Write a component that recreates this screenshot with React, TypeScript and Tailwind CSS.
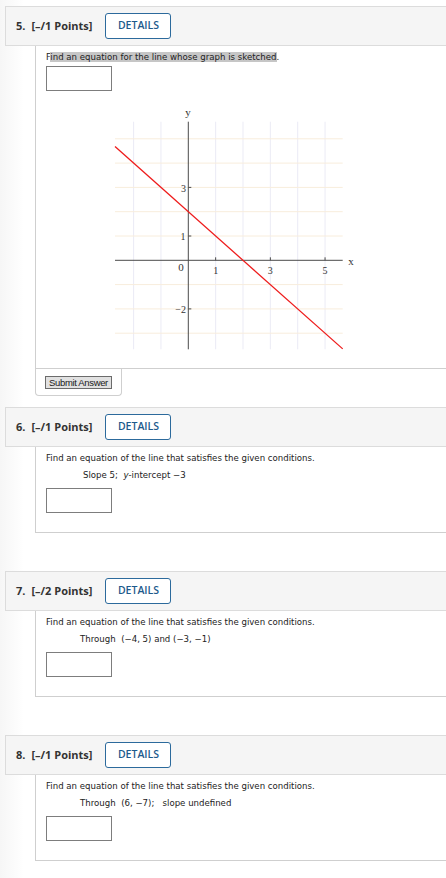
import React from "react";

function Header({ n, pts }: { n: string; pts: string }) {
  return (
    <div className="ml-[5px] h-[40px] border-y border-l border-[#dcdcdc] bg-[#f5f5f5] flex items-center pl-[10px]">
      <span className="font-['Open_Sans'] font-bold text-[11px] text-[#333]">{n}</span>
      <span className="ml-[6px] font-['Open_Sans'] font-bold text-[11px] text-[#333]">{pts}</span>
      <button className="ml-[13px] w-[66px] h-[26px] rounded-[3px] border-[1.5px] border-[#2c6a9c] bg-white font-['Open_Sans'] font-semibold text-[10.5px] text-[#1d5a8c] flex items-center justify-center">
        DETAILS
      </button>
    </div>
  );
}

function AnswerBox() {
  return <div className="mt-[7px] w-[66px] h-[25px] border border-[#7d7d7d] bg-white" />;
}

function Graph() {
  const ox = 83.3;
  const oy = 156.3;
  const ux = 27.35;
  const uy = 24.3;
  const xl = 10;
  const xr = 237.7;
  const yt = 17.7;
  const yb = 245.3;
  const vx = [-2, -1, 1, 2, 3, 4, 5];
  const hy = [5, 4, 3, 2, 1, -1, -2, -3];
  const f = (x: number) => -x + 2;
  const x1 = (xl - ox) / ux;
  const x2 = (xr - ox) / ux;
  return (
    <svg width="250" height="250" className="ml-[59px] mt-[13px] block" style={{ fontFamily: "'Liberation Serif', serif" }}>
      {vx.map((k) => (
        <line key={"v" + k} x1={ox + ux * k} x2={ox + ux * k} y1={yt} y2={yb} stroke="#ebebf5" strokeWidth="1" />
      ))}
      {hy.map((k) => (
        <line key={"h" + k} x1={xl} x2={xr} y1={oy - uy * k} y2={oy - uy * k} stroke="#f8eddc" strokeWidth="1" />
      ))}
      <line x1={xl} x2={xr} y1={oy} y2={oy} stroke="#4a4a4a" strokeWidth="1" />
      <line x1={ox} x2={ox} y1={yt} y2={yb} stroke="#4a4a4a" strokeWidth="1" />
      {[1, 3, 5].map((k) => (
        <line key={"tx" + k} x1={ox + ux * k} x2={ox + ux * k} y1={oy - 3} y2={oy} stroke="#4a4a4a" strokeWidth="1" />
      ))}
      {[3, 1, -2].map((k) => (
        <line key={"ty" + k} x1={ox} x2={ox + 3} y1={oy - uy * k} y2={oy - uy * k} stroke="#4a4a4a" strokeWidth="1" />
      ))}
      <line
        x1={xl}
        y1={oy - uy * f(x1)}
        x2={xr}
        y2={oy - uy * f(x2)}
        stroke="#ee1c1c"
        strokeWidth="1.3"
      />
      <text x={83} y={12} fontSize="11" fill="#333" textAnchor="middle">y</text>
      <text x={246} y={161} fontSize="11" fill="#333" textAnchor="middle">x</text>
      <text x={81} y={88} fontSize="10" fill="#333" textAnchor="end">3</text>
      <text x={80.5} y={135.5} fontSize="10" fill="#333" textAnchor="end">1</text>
      <text x={81} y={208.5} fontSize="10" fill="#333" textAnchor="end">−2</text>
      <text x={76} y={166.5} fontSize="11" fill="#333" textAnchor="middle">0</text>
      <text x={ox + ux} y={169.5} fontSize="10" fill="#333" textAnchor="middle">1</text>
      <text x={ox + ux * 3} y={169.5} fontSize="10" fill="#333" textAnchor="middle">3</text>
      <text x={ox + ux * 5} y={169.5} fontSize="10" fill="#333" textAnchor="middle">5</text>
    </svg>
  );
}

const body = "font-['DejaVu_Sans'] text-[8.6px] leading-[12px] text-[#222] whitespace-pre";

export default function App() {
  return (
    <div className="w-[446px] min-h-[878px] overflow-hidden bg-[linear-gradient(to_right,#f6f6f6,#ffffff_24px)] pt-[6px]">
      {/* Question 5 */}
      <Header n="5." pts="[–/1 Points]" />
      <div className="ml-[35px] border-l border-b border-[#cfcfcf] bg-white pl-[10px] pt-[5px] pb-[14px]">
        <p className={body}>
          F<span className="bg-[#c6c6c6]">ind an equation for the line whose graph is sketched</span>.
        </p>
        <div className="mt-[3px] w-[66px] h-[25px] border border-[#7d7d7d] bg-white" />
        <Graph />
      </div>
      <div className="ml-[35px] w-[87px] h-[27px] border-x border-b border-[#cfcfcf] rounded-b-[4px] bg-white pl-[9px] pt-[7px]">
        <button className="w-[67px] h-[13px] border border-[#6b6b6b] bg-[#e1e1e1] font-['Liberation_Sans'] text-[9.5px] leading-[11px] tracking-[-0.35px] text-[#1a1a1a] flex items-center justify-center">
          Submit Answer
        </button>
      </div>

      {/* Question 6 */}
      <div className="mt-[11px]">
        <Header n="6." pts="[–/1 Points]" />
        <div className="ml-[35px] border-l border-b border-[#cfcfcf] bg-white pl-[10px] pt-[5px] pb-[19px]">
          <p className={body}>Find an equation of the line that satisfies the given conditions.</p>
          <p className={body + " mt-[5px] ml-[37px]"}>
            Slope 5;{"  "}
            <span className="italic">y</span>-intercept −3
          </p>
          <AnswerBox />
        </div>
      </div>

      {/* Question 7 */}
      <div className="mt-[38px]">
        <Header n="7." pts="[–/2 Points]" />
        <div className="ml-[35px] border-l border-b border-[#cfcfcf] bg-white pl-[10px] pt-[5px] pb-[19px]">
          <p className={body}>Find an equation of the line that satisfies the given conditions.</p>
          <p className={body + " mt-[5px] ml-[34px]"}>Through{"  "}(−4, 5) and (−3, −1)</p>
          <AnswerBox />
        </div>
      </div>

      {/* Question 8 */}
      <div className="mt-[38px]">
        <Header n="8." pts="[–/1 Points]" />
        <div className="ml-[35px] border-l border-b border-[#cfcfcf] bg-white pl-[10px] pt-[5px] pb-[19px]">
          <p className={body}>Find an equation of the line that satisfies the given conditions.</p>
          <p className={body + " mt-[5px] ml-[34px]"}>Through{"  "}(6, −7);{"   "}slope undefined</p>
          <AnswerBox />
        </div>
      </div>
    </div>
  );
}
